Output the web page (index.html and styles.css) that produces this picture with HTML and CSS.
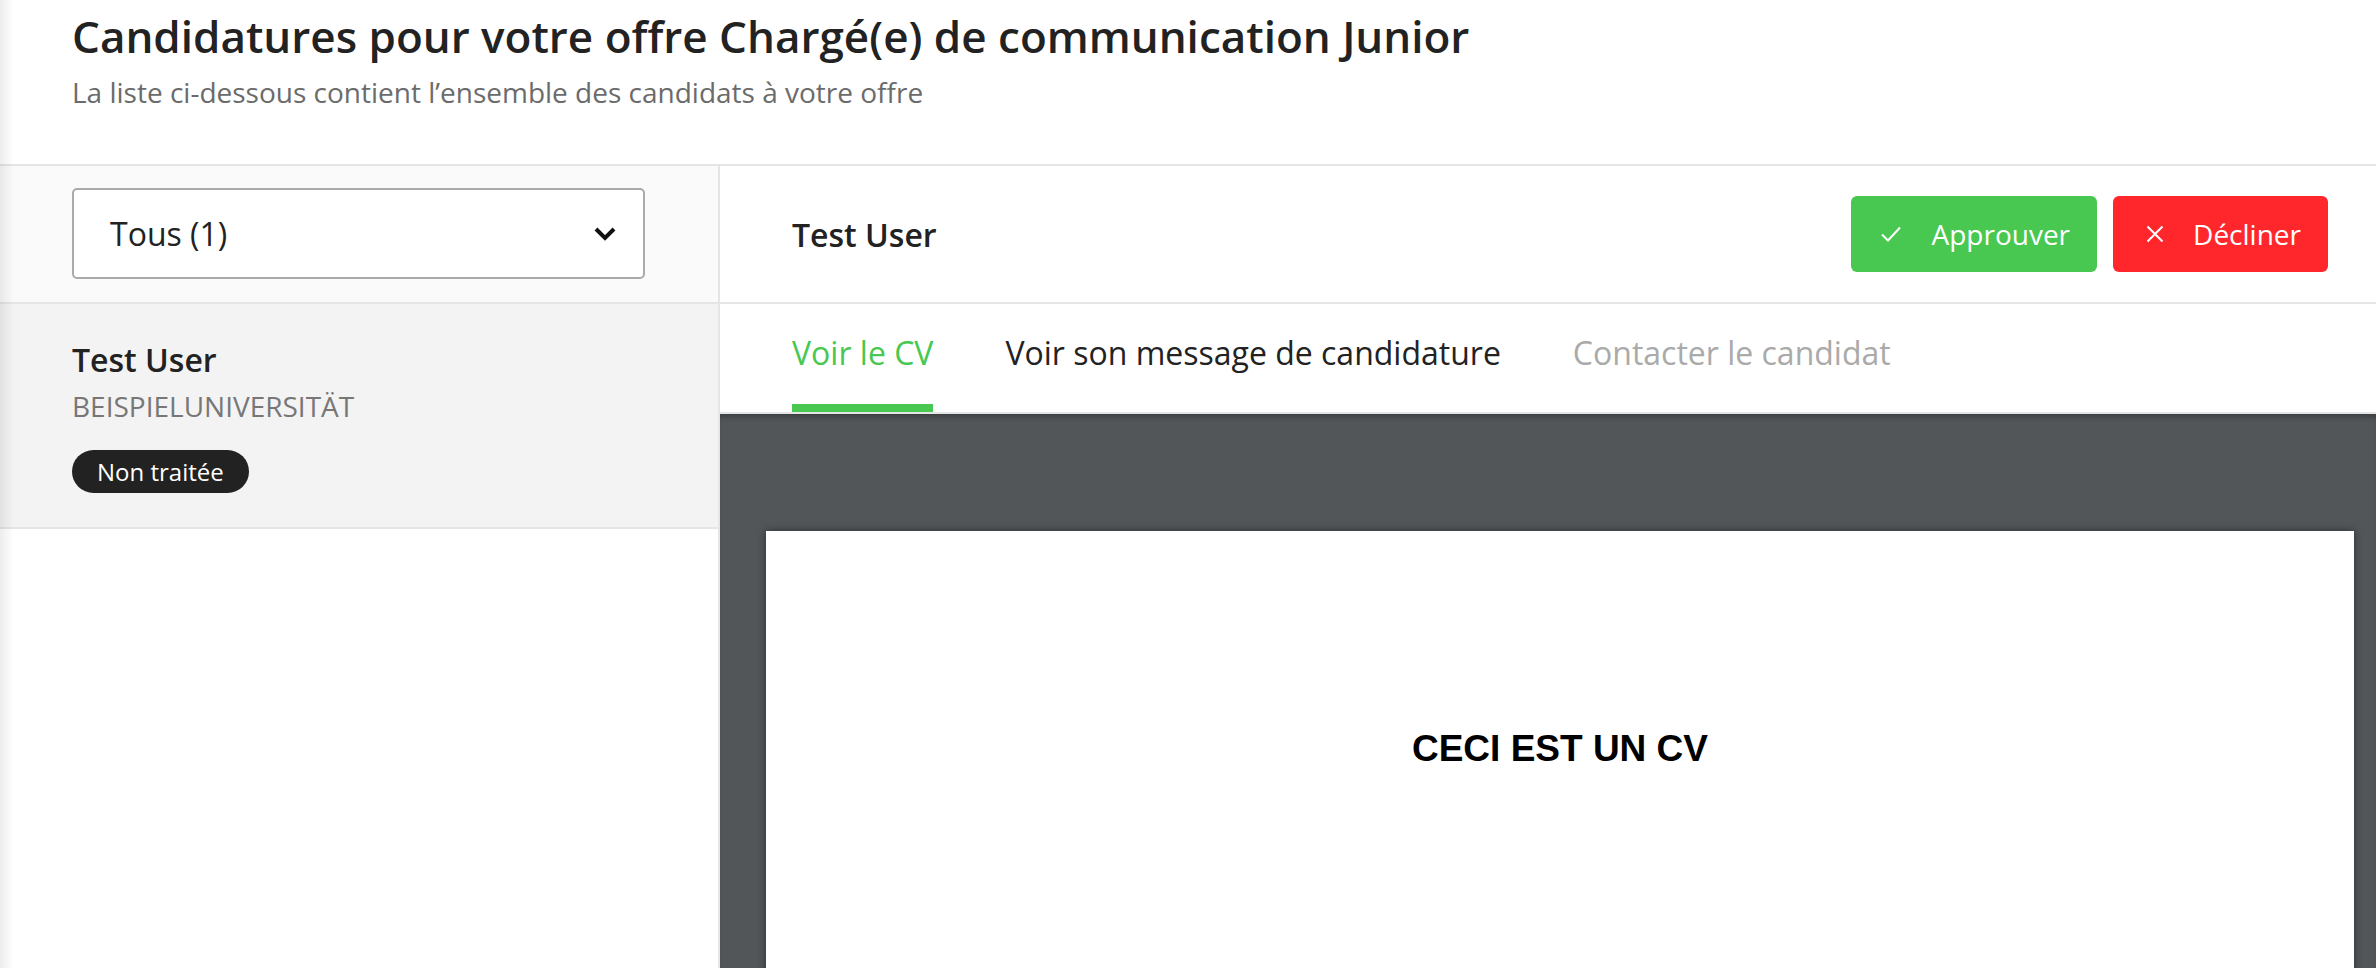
FILE: index.html
```html
<html>
    <head>
        <title>Candidatures</title>
        <link rel="stylesheet" href="styles.css">
    </head>
    <body>
        <div class="page">
            <header class="top">
                <h1>Candidatures pour votre offre Chargé(e) de communication Junior</h1>
                <p>La liste ci-dessous contient l’ensemble des candidats à votre offre</p>
            </header>
            <div class="main">
                <aside class="sidebar">
                    <div class="filter">
                        <div class="select">
                            <span>Tous (1)</span>
                            <svg width="24" height="16" viewBox="0 0 24 16"><path d="M3 3 L12 12 L21 3" fill="none" stroke="#111" stroke-width="4"/></svg>
                        </div>
                    </div>
                    <div class="candidate active">
                        <div class="candidate-name">Test User</div>
                        <div class="candidate-school">BEISPIELUNIVERSITÄT</div>
                        <span class="badge">Non traitée</span>
                    </div>
                </aside>
                <section class="detail">
                    <div class="detail-head">
                        <div class="detail-name">Test User</div>
                        <div class="actions">
                            <button class="btn btn-ok">
                                <svg width="22" height="18" viewBox="0 0 22 18"><path d="M2 9.5 L8 15.5 L20 2.5" fill="none" stroke="#fff" stroke-width="2"/></svg>
                                Approuver
                            </button>
                            <button class="btn btn-no">
                                <svg width="18" height="18" viewBox="0 0 18 18"><path d="M1.5 1.5 L16.5 16.5 M16.5 1.5 L1.5 16.5" fill="none" stroke="#fff" stroke-width="2"/></svg>
                                Décliner
                            </button>
                        </div>
                    </div>
                    <nav class="tabs">
                        <a class="tab current">Voir le CV</a>
                        <a class="tab">Voir son message de candidature</a>
                        <a class="tab disabled">Contacter le candidat</a>
                    </nav>
                    <div class="viewer">
                        <div class="paper">
                            <div class="cv-title">CECI EST UN CV</div>
                        </div>
                    </div>
                </section>
            </div>
        </div>
    </body>
</html>
```

FILE: styles.css
```css
body {
    margin: 0;
    font-family: "Open Sans", "Noto Sans", sans-serif;
    color: #222;
    background: #fff;
}
.page {
    height: 100vh;
    display: flex;
    flex-direction: column;
    overflow: hidden;
}
.page::before {
    content: "";
    position: fixed;
    left: 0;
    top: 0;
    bottom: 0;
    width: 14px;
    background: linear-gradient(to right, rgba(0,0,0,0.07), rgba(0,0,0,0));
    pointer-events: none;
}
.top {
    height: 166px;
    flex-shrink: 0;
    box-sizing: border-box;
    padding: 10px 72px 0;
    border-bottom: 2px solid #e5e5e5;
}
.top h1 {
    margin: 0;
    font-size: 44px;
    line-height: 52px;
    font-weight: 600;
}
.top p {
    margin: 12px 0 0;
    font-size: 28px;
    line-height: 36px;
    color: #6b6b6b;
}
.main {
    flex: 1;
    display: flex;
    min-height: 0;
}
.sidebar {
    width: 720px;
    box-sizing: border-box;
    border-right: 2px solid #e5e5e5;
    flex-shrink: 0;
}
.filter {
    height: 138px;
    box-sizing: border-box;
    padding: 22px 0 0 72px;
    background: #fafafa;
    border-bottom: 2px solid #e5e5e5;
}
.select {
    width: 573px;
    height: 91px;
    box-sizing: border-box;
    border: 2px solid #aaa;
    border-radius: 5px;
    background: #fff;
    display: flex;
    align-items: center;
    justify-content: space-between;
    padding: 0 26px 0 36px;
    font-size: 32px;
}
.candidate {
    padding: 36px 72px 34px;
    border-bottom: 2px solid #e5e5e5;
}
.candidate.active {
    background: #f3f3f3;
}
.candidate-name {
    font-size: 32px;
    line-height: 40px;
    font-weight: 600;
}
.candidate-school {
    margin-top: 9px;
    font-size: 28px;
    line-height: 34px;
    color: #777;
}
.badge {
    display: inline-block;
    margin-top: 27px;
    height: 43px;
    line-height: 43px;
    padding: 0 25px;
    border-radius: 22px;
    background: #222;
    color: #fff;
    font-size: 24px;
}
.detail {
    flex: 1;
    display: flex;
    flex-direction: column;
    min-width: 0;
}
.detail-head {
    height: 138px;
    flex-shrink: 0;
    box-sizing: border-box;
    border-bottom: 2px solid #e5e5e5;
    display: flex;
    align-items: center;
    justify-content: space-between;
    padding: 0 48px 0 72px;
}
.detail-name {
    font-size: 32px;
    font-weight: 600;
}
.actions {
    display: flex;
    gap: 16px;
}
.btn {
    height: 76px;
    border: 0;
    border-radius: 6px;
    display: flex;
    align-items: center;
    gap: 29px;
    padding: 0 27px 0 29px;
    font-family: inherit;
    font-size: 28px;
    color: #fff;
}
.btn-ok {
    background: #48c851;
}
.btn-no {
    background: #ff272c;
    padding-left: 33px;
}
.tabs {
    height: 110px;
    flex-shrink: 0;
    box-sizing: border-box;
    border-bottom: 2px solid #e5e5e5;
    display: flex;
    gap: 72px;
    padding-left: 72px;
}
.tab {
    padding: 27px 0 29px;
    font-size: 32px;
    line-height: 44px;
    border-bottom: 8px solid transparent;
    color: #222;
}
.tab.current {
    color: #48c851;
    border-bottom-color: #48c851;
}
.tab.disabled {
    color: #aaa;
}
.viewer {
    flex: 1;
    background: #525659;
    padding: 117px 22px 0 46px;
    box-shadow: inset 0 6px 6px -4px rgba(0,0,0,0.35);
    overflow: hidden;
}
.paper {
    height: 1200px;
    background: #fff;
    box-shadow: 0 0 8px rgba(0,0,0,0.45);
    padding-top: 196px;
    box-sizing: border-box;
}
.cv-title {
    text-align: center;
    font-family: "Liberation Sans", Arial, sans-serif;
    font-weight: bold;
    font-size: 37px;
    line-height: 44px;
    color: #000;
}
```
